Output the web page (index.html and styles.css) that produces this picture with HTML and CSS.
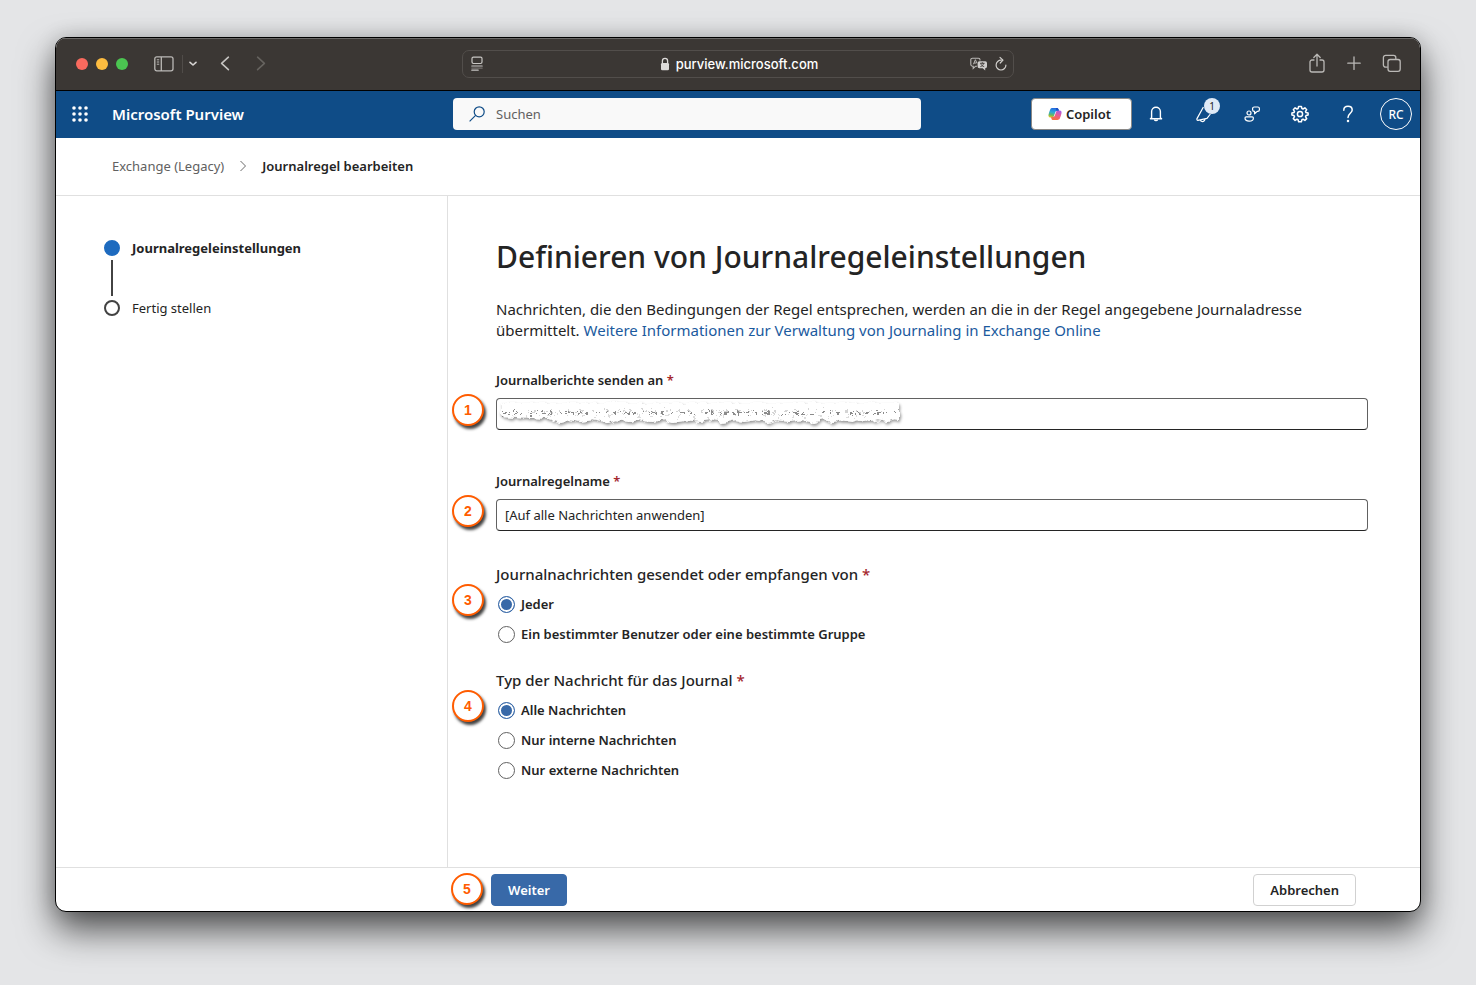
FILE: index.html
```html
<!DOCTYPE html>
<html lang="de">
<head>
    <meta charset="UTF-8">
    <meta name="viewport" content="width=device-width, initial-scale=1.0">
    <title>Journalregel bearbeiten - Microsoft Purview</title>
    <link rel="stylesheet" href="styles.css">
</head>
<body>
    <div class="window">
        <div class="titlebar">
            <div class="titlebar-left">
                <span class="light red"></span>
                <span class="light yellow"></span>
                <span class="light green"></span>
                <button class="tool sidebar-btn" aria-label="Seitenleiste">
                    <svg width="20" height="16" viewBox="0 0 20 16" fill="none" stroke="#bbb9b6" stroke-width="1.3"><rect x="0.8" y="0.8" width="18.2" height="14" rx="2"/><path d="M7.3 1v14"/><path d="M2.8 3.8h2.4M2.8 6h2.4M2.8 8.2h2.4" stroke-width="1"/></svg>
                </button>
                <span class="divider"></span>
                <button class="tool menu-btn" aria-label="Tabgruppen">
                    <svg width="8" height="6" viewBox="0 0 8 6" fill="none" stroke="#d5d3d1" stroke-width="1.6" stroke-linecap="round" stroke-linejoin="round"><path d="M1 1.3L4 4l3-2.7"/></svg>
                </button>
                <button class="tool back-btn" aria-label="Zurück">
                    <svg width="10" height="16" viewBox="0 0 10 16" fill="none" stroke="#c5c3c0" stroke-width="1.6" stroke-linecap="round" stroke-linejoin="round"><path d="M8.4 1.2L1.6 7.4l6.800 6.200"/></svg>
                </button>
                <button class="tool forward-btn" aria-label="Vorwärts">
                    <svg width="10" height="16" viewBox="0 0 10 16" fill="none" stroke="#66635f" stroke-width="1.6" stroke-linecap="round" stroke-linejoin="round"><path d="M1.6 1.2L8.4 7.4l-6.8 6.2"/></svg>
                </button>
            </div>
            <div class="address">
                <svg width="12" height="16" viewBox="0 0 12 16" fill="none" stroke="#c8c6c3" stroke-width="1.2" stroke-linecap="round"><rect x="1" y="1.2" width="10" height="6.3" rx="1.4"/><path d="M0.8 10h10.4M0.8 14.2h6.4"/><path d="M0.8 12.1h10.4" stroke-opacity="0.4"/></svg>
                <span class="url">
                    <svg width="10" height="14" viewBox="0 0 10 14"><path d="M2.4 6.2V4a2.6 2.6 0 0 1 5.2 0v2.2" fill="none" stroke="#dddbd9" stroke-width="1.3"/><rect x="1" y="6" width="8" height="7.2" rx="1.3" fill="#dddbd9"/></svg>
                    purview.microsoft.com
                </span>
                <span class="address-end">
                    <svg width="18" height="14" viewBox="0 0 18 14" fill="none"><path d="M7 9.2H5.6L3.2 11.4V9.2H2.4a1.6 1.6 0 0 1-1.6-1.6V2.8a1.6 1.6 0 0 1 1.6-1.6h6a1.6 1.6 0 0 1 1.6 1.6v.6" stroke="#bbb9b6" stroke-width="1.1"/><path d="M3.4 7.3l2-4.6 1.5 3.4M4 6h2.4" stroke="#bbb9b6"/><path d="M9.3 4.2h6a1.7 1.7 0 0 1 1.7 1.7v3.7a1.7 1.7 0 0 1-1.7 1.7h-.1v2.3l-2.5-2.3H9.3a1.7 1.7 0 0 1-1.7-1.7V5.9a1.7 1.7 0 0 1 1.7-1.7z" fill="#cfcdcb"/><path d="M10 6.3h4.6M12.3 5.2v1.1M10.4 9.6c1.8-.5 2.9-1.7 3.2-3.2M11 7.3c.4 1 1.6 2 3.2 2.3" stroke="#3b3734" stroke-width="0.9"/></svg>
                    <svg width="12" height="16" viewBox="0 0 12 16" fill="none" stroke="#d0cecb" stroke-width="1.2" stroke-linecap="round" stroke-linejoin="round"><path d="M6.3 4.2A4.9 4.9 0 1 0 10.9 9"/><path d="M5 1.4l3 2.8-2.8 2.8"/></svg>
                </span>
            </div>
            <div class="titlebar-right">
                <button class="tool" aria-label="Teilen">
                    <svg width="18" height="22" viewBox="0 0 18 22" fill="none" stroke="#bbb9b6" stroke-width="1.3" stroke-linecap="round" stroke-linejoin="round"><path d="M6 7H4a2 2 0 0 0-2 2v8a2 2 0 0 0 2 2h10a2 2 0 0 0 2-2V9a2 2 0 0 0-2-2h-2"/><path d="M9 13V1.500M5.8 4.500L9 1.300l3.200 3.200"/></svg>
                </button>
                <button class="tool" aria-label="Neuer Tab">
                    <svg width="18" height="18" viewBox="0 0 18 18" stroke="#bbb9b6" stroke-width="1.3" stroke-linecap="round"><path d="M9 2v12.4M2.8 8.200h12.400"/></svg>
                </button>
                <button class="tool" aria-label="Tabübersicht">
                    <svg width="20" height="20" viewBox="0 0 20 20" fill="none" stroke="#bbb9b6" stroke-width="1.3"><rect x="6" y="5.500" width="12.2" height="11.8" rx="2.2"/><path d="M5.8 13.1H3.6a2.2 2.2 0 0 1-2.2-2.2V3.500a2.2 2.2 0 0 1 2.2-2.2h8a2.2 2.2 0 0 1 2.2 2.2v1.8"/></svg>
                </button>
            </div>
        </div>

        <header class="header">
            <button class="icon-btn" aria-label="App-Startfeld">
                <svg width="18" height="18" viewBox="0 0 18 18" fill="#fff"><circle cx="3" cy="3" r="1.8"/><circle cx="9" cy="3" r="1.8"/><circle cx="15" cy="3" r="1.8"/><circle cx="3" cy="9" r="1.8"/><circle cx="9" cy="9" r="1.8"/><circle cx="15" cy="9" r="1.8"/><circle cx="3" cy="15" r="1.8"/><circle cx="9" cy="15" r="1.8"/><circle cx="15" cy="15" r="1.8"/></svg>
            </button>
            <a class="brand" href="#">Microsoft Purview</a>
            <label class="search">
                <svg width="16" height="16" viewBox="0 0 16 16" fill="none" stroke="#0f4c87" stroke-width="1.2"><circle cx="10.2" cy="5.8" r="5"/><path d="M6.6 9.4L0.6 15.4"/></svg>
                <input type="text" placeholder="Suchen" aria-label="Suchen">
            </label>
            <div class="actions">
                <button class="copilot">
                    <svg width="14" height="14" viewBox="0 0 14 14">
                        <defs>
                            <linearGradient id="cool" x1="0.5" y1="0" x2="0.3" y2="1"><stop offset="0" stop-color="#2468e0"/><stop offset="0.45" stop-color="#2fa8d8"/><stop offset="0.75" stop-color="#62b868"/><stop offset="1" stop-color="#e5c21d"/></linearGradient>
                            <linearGradient id="warm" x1="0.8" y1="0" x2="0.4" y2="1"><stop offset="0" stop-color="#a65be8"/><stop offset="0.5" stop-color="#ee5a8e"/><stop offset="1" stop-color="#f8743c"/></linearGradient>
                        </defs>
                        <path d="M4.6 1h4.2c1 0 1.500.6 1.800 1.600l.4 1.400H9c-1 0-1.500.5-1.800 1.400L6 8.800C5.700 9.800 5.100 10.400 4.100 10.400H2.200C.8 10.400.2 9.300.5 7.800 1 5.800 1.400 4 2.200 2.400 2.700 1.400 3.500 1 4.600 1z" fill="url(#cool)"/>
                        <path d="M9.400 13H5.200c-1 0-1.500-.6-1.800-1.600L3 10h2c1 0 1.500-.5 1.800-1.400L8 5.200c.3-1 .9-1.600 1.900-1.600h1.900c1.400 0 2 1.100 1.700 2.600-.5 2-.9 3.800-1.700 5.400-.5 1-1.300 1.400-2.400 1.400z" fill="url(#warm)"/>
                        <path d="M7.800 1h1c1 0 1.500.6 1.800 1.600l.3 1H8.500z" fill="#1c4fc4"/>
                    </svg>
                    Copilot
                </button>
                <button class="icon-btn" aria-label="Benachrichtigungen">
                    <svg width="16" height="18" viewBox="0 0 16 18" fill="none" stroke="#fff" stroke-width="1.4" stroke-linejoin="round"><path d="M3.6 12.8V6.6a4.4 4.4 0 0 1 8.8 0v6.2l1.2 1H2.4z"/><path d="M6.4 14.4a1.7 1.7 0 0 0 3.2 0"/></svg>
                </button>
                <button class="icon-btn" aria-label="Neuigkeiten">
                    <svg width="18" height="18" viewBox="0 0 18 18" fill="none" stroke="#fff" stroke-width="1.2" stroke-linejoin="round"><path d="M8.4 2L2 13.6c-.4.8 0 1.6.9 1.7L12 13.400l3.400-4.400"/><path d="M5.4 15c.4 1.600 2.400 2.100 3.800.8.500-.5.700-1.100.6-1.800"/></svg>
                    <span class="count">1</span>
                </button>
                <button class="icon-btn" aria-label="Feedback">
                    <svg width="18" height="18" viewBox="0 0 18 18" fill="none" stroke="#fff" stroke-width="1.2" stroke-linejoin="round"><circle cx="6" cy="8" r="2"/><path d="M3.200 11.800h6a1.200 1.200 0 0 1 1.200 1.200c0 2-1.700 3.200-4.200 3.200S2 15 2 13a1.200 1.200 0 0 1 1.200-1.200z"/><path d="M11.200 2h3.600A1.600 1.600 0 0 1 16.400 3.600v1.200a1.600 1.600 0 0 1-1.600 1.600h-.6l-2.600 2.400V6.400h-.4A1.600 1.600 0 0 1 9.600 4.800V3.600A1.600 1.600 0 0 1 11.200 2z"/></svg>
                </button>
                <button class="icon-btn" aria-label="Einstellungen">
                    <svg width="18" height="18" viewBox="0 0 18 18" fill="none" stroke="#fff" stroke-width="1.5" stroke-linejoin="round"><path d="M7.6 1.4h2.8l.5 2.1 1.1.5 1.9-1.2 1.8 1.9-1.2 1.8.5 1.1 2.1.5v2l-2.1.5-.5 1.1 1.2 1.9-1.8 1.800-1.900-1.200-1.100.5-.5 2.100H7.600l-.5-2.100-1.100-.5-1.900 1.200-1.800-1.800 1.200-1.900-.5-1.100-2.100-.5v-2L3 7.600l.5-1.100-1.200-1.800 1.800-1.900L6 4l1.100-.5z"/><circle cx="9" cy="9" r="2.6"/></svg>
                </button>
                <button class="icon-btn" aria-label="Hilfe">
                    <svg width="12" height="18" viewBox="0 0 12 18" fill="none" stroke="#fff" stroke-width="1.5" stroke-linecap="round"><path d="M1.8 5.2C1.8 2.8 3.5 1.3 6 1.3s4.2 1.5 4.2 3.7C10.200 8 6 8.600 6 12.400"/><circle cx="6" cy="16" r="0.5" fill="#fff"/></svg>
                </button>
                <button class="icon-btn" aria-label="Konto"><span class="avatar">RC</span></button>
            </div>
        </header>

        <nav class="breadcrumb">
            <a href="#">Exchange (Legacy)</a>
            <svg width="8" height="12" viewBox="0 0 8 12" fill="none" stroke="#6b6b6b"><path d="M1.5 1l5 5-5 5"/></svg>
            <strong>Journalregel bearbeiten</strong>
        </nav>

        <div class="content">
            <ol class="steps">
                <li class="step active">Journalregeleinstellungen</li>
                <li class="step">Fertig stellen</li>
            </ol>

            <main class="main">
                <h1>Definieren von Journalregeleinstellungen</h1>
                <p class="intro">Nachrichten, die den Bedingungen der Regel entsprechen, werden an die in der Regel angegebene Journaladresse übermittelt. <a href="#">Weitere Informationen zur Verwaltung von Journaling in Exchange Online</a></p>

                <form id="rule">
                    <div class="field">
                        <label for="address">Journalberichte senden an <span class="required">*</span></label>
                        <div class="control">
                            <span class="badge">1</span>
                            <input type="text" id="address">
                            <!-- torn strip that hides the address -->
                            <svg class="redacted" width="410" height="30" viewBox="0 0 410 30">
                                <defs>
                                    <filter id="rough" x="-2%" y="-30%" width="104%" height="160%">
                                        <feTurbulence type="fractalNoise" baseFrequency="0.13" numOctaves="3" seed="4"/>
                                        <feDisplacementMap in="SourceGraphic" scale="6" xChannelSelector="R" yChannelSelector="G"/>
                                        <feDropShadow dx="1" dy="2" stdDeviation="1.5" flood-color="#000" flood-opacity="0.42"/>
                                    </filter>
                                    <filter id="specks" x="-2%" y="-20" width="104%" height="60" filterUnits="userSpaceOnUse">
                                        <feTurbulence type="fractalNoise" baseFrequency="0.3" numOctaves="2" seed="9"/>
                                        <feDisplacementMap in="SourceGraphic" scale="9" xChannelSelector="R" yChannelSelector="G"/>
                                        <feGaussianBlur stdDeviation="0.4"/>
                                    </filter>
                                </defs>
                                <path d="M4 17L4 4h398v18l-5-1-7 2-8-2-9 2-9-3-8 3-12-2-8 2-10-2-9 3-11-3-14 2-12-2-8 3-13-3-12 2-8-2-14 3-12-3-10 2-12-2-15 3-9-3-12 2-14-2-9 2-12-2-11 3-13-3-12 2-12-2-9 3-12-4z" fill="#fff" filter="url(#rough)"/>
                                <g fill="none" filter="url(#specks)">
                                    <path d="M5 14h394" stroke="#666" stroke-width="1.5" stroke-dasharray="3 4 1 3 5 4 2 6"/>
                                    <path d="M30 12h360" stroke="#aaa" stroke-dasharray="1 5 3 9 2 4"/>
                                    <path d="M14 17h370" stroke="#bbb" stroke-dasharray="2 7 1 4 3 11"/>
                                </g>
                            </svg>
                        </div>
                    </div>

                    <div class="field">
                        <label for="name">Journalregelname <span class="required">*</span></label>
                        <div class="control">
                            <span class="badge">2</span>
                            <input type="text" id="name" value="[Auf alle Nachrichten anwenden]">
                        </div>
                    </div>

                    <fieldset>
                        <legend>Journalnachrichten gesendet oder empfangen von <span class="required">*</span></legend>
                        <span class="badge">3</span>
                        <label class="radio"><input type="radio" name="scope" checked> Jeder</label>
                        <label class="radio"><input type="radio" name="scope"> Ein bestimmter Benutzer oder eine bestimmte Gruppe</label>
                    </fieldset>

                    <fieldset>
                        <legend>Typ der Nachricht für das Journal <span class="required">*</span></legend>
                        <span class="badge">4</span>
                        <label class="radio"><input type="radio" name="type" checked> Alle Nachrichten</label>
                        <label class="radio"><input type="radio" name="type"> Nur interne Nachrichten</label>
                        <label class="radio"><input type="radio" name="type"> Nur externe Nachrichten</label>
                    </fieldset>
                </form>
            </main>
        </div>

        <footer class="footer">
            <div class="next">
                <span class="badge">5</span>
                <button class="btn primary" type="submit" form="rule">Weiter</button>
            </div>
            <button class="btn" type="button">Abbrechen</button>
        </footer>
    </div>
</body>
</html>
```
FILE: styles.css
```css
*,
*::before,
*::after {
    box-sizing: border-box;
}
body {
    margin: 0;
    min-height: 100vh;
    padding: 37px 55px 73px;
    display: flex;
    background: #e4e5e7;
    color: #242424;
    font-family: "Noto Sans", "Open Sans", sans-serif;
    font-size: 13px;
    line-height: 20px;
}
button,
input {
    font: inherit;
    color: inherit;
}
button {
    cursor: pointer;
}
a {
    color: inherit;
    text-decoration: none;
}
svg {
    flex: none;
}
.window {
    flex: 1;
    min-width: 0;
    display: flex;
    flex-direction: column;
    background: #fff;
    border: 1px solid #000;
    border-radius: 11px;
    overflow: hidden;
    box-shadow: 0 18px 36px rgba(0, 0, 0, 0.65), 0 0 20px rgba(0, 0, 0, 0.15);
}

/* browser bar */
.titlebar {
    display: grid;
    grid-template-columns: 1fr minmax(200px, 552px) 1fr;
    align-items: center;
    height: 53px;
    background: #3b3734;
    border-bottom: 1px solid #000;
    box-shadow: inset 0 1px #6b6967;
}
.titlebar-left {
    display: flex;
    align-items: center;
    gap: 8px;
    padding-left: 20px;
}
.light {
    width: 12px;
    height: 12px;
    border-radius: 50%;
}
.red {
    background: #f96a5e;
}
.yellow {
    background: #fdbc40;
}
.green {
    background: #4bc551;
}
.tool {
    display: flex;
    padding: 0;
    border: 0;
    background: none;
}
.sidebar-btn {
    margin-left: 18px;
}
.divider {
    width: 1px;
    height: 18px;
    background: #504c49;
}
.menu-btn {
    margin-left: -2px;
}
.back-btn {
    margin-left: 15px;
}
.forward-btn {
    margin-left: 18px;
}
.address {
    display: grid;
    grid-template-columns: 1fr auto 1fr;
    align-items: center;
    height: 28px;
    padding: 0 6px 0 8px;
    border: 1px solid #524e4b;
    border-radius: 7px;
}
.url {
    display: flex;
    align-items: center;
    gap: 6px;
    color: #fff;
    font-family: Inter, sans-serif;
    font-weight: 500;
}
.address-end {
    display: flex;
    align-items: center;
    justify-content: flex-end;
    gap: 7px;
}
.titlebar-right {
    display: flex;
    align-items: center;
    justify-content: flex-end;
    gap: 19px;
    padding-right: 18px;
}

/* app header */
.header {
    display: flex;
    align-items: center;
    height: 47px;
    padding-bottom: 2px;
    background: #0f4c87;
    color: #fff;
}
.icon-btn {
    position: relative;
    display: flex;
    align-items: center;
    justify-content: center;
    width: 48px;
    height: 45px;
    padding: 0;
    border: 0;
    background: none;
}
.brand {
    flex: 0 1 341px;
    margin-left: 8px;
    font-size: 15px;
    font-weight: 600;
}
.search {
    flex: 0 1 468px;
    display: flex;
    align-items: center;
    gap: 11px;
    height: 32px;
    padding-left: 16px;
    background: #f9f9f9;
    border-radius: 4px;
}
.search input {
    flex: 1;
    min-width: 0;
    padding: 0;
    border: 0;
    background: none;
    color: #242424;
}
.search input::placeholder {
    color: #616161;
    opacity: 1;
}
.actions {
    display: flex;
    align-items: center;
    margin-left: auto;
}
.copilot {
    display: flex;
    align-items: center;
    gap: 4px;
    height: 32px;
    padding: 0 20px 0 16px;
    border: 1px solid #8a8886;
    border-radius: 4px;
    background: #fff;
    color: #242424;
    font-weight: 600;
}
.count {
    position: absolute;
    top: 7px;
    right: 8px;
    width: 16px;
    height: 16px;
    border-radius: 50%;
    background: #dfeaf7;
    color: #242424;
    font-size: 10px;
    line-height: 16px;
}
.avatar {
    width: 32px;
    height: 32px;
    border: 1px solid #fff;
    border-radius: 50%;
    font-size: 12px;
    font-weight: 500;
    line-height: 32px;
}

.breadcrumb {
    display: flex;
    align-items: center;
    gap: 15px;
    height: 58px;
    padding: 0 56px 2px;
    border-bottom: 1px solid #e0e0e0;
}
.breadcrumb a {
    color: #616161;
}
.breadcrumb strong {
    font-weight: 600;
}

.content {
    flex: 1;
    display: flex;
}
.steps {
    flex: 0 0 392px;
    margin: 0;
    padding: 42px 48px;
    border-right: 1px solid #e0e0e0;
    list-style: none;
}
.step {
    position: relative;
    display: flex;
    align-items: center;
    gap: 12px;
    margin-bottom: 40px;
}
.step::before {
    content: "";
    width: 16px;
    height: 16px;
    border: 2px solid #424242;
    border-radius: 50%;
}
.step.active {
    font-weight: 700;
}
.step.active::before {
    border-color: #1e6bbf;
    background: #1e6bbf;
}
.step.active::after {
    content: "";
    position: absolute;
    left: 7px;
    top: 22px;
    width: 2px;
    height: 36px;
    background: #424242;
}

.main {
    flex: 1;
    min-width: 0;
    padding: 41px 52px 24px 48px;
}
h1 {
    margin: 0 0 22px;
    font-size: 30px;
    font-weight: 500;
    line-height: 40px;
}
.intro {
    margin: 0 0 29px;
    font-size: 15px;
    line-height: 21px;
}
.intro a {
    color: #1b5a9e;
}
.field {
    margin-bottom: 41px;
    font-weight: 600;
}
.field label {
    display: block;
    margin-bottom: 8px;
}
.required {
    color: #a4262c;
}
.control {
    position: relative;
}
.control input {
    display: block;
    width: 100%;
    height: 32px;
    padding: 0 8px;
    border: 1px solid #616161;
    border-bottom-color: #242424;
    border-radius: 4px;
    background: #fff;
    font-weight: 400;
}
.redacted {
    position: absolute;
    left: 1px;
    top: 1px;
}
.field + fieldset {
    margin-top: -9px;
}
fieldset {
    position: relative;
    margin: 0 0 20px;
    padding: 0;
    border: 0;
}
legend {
    margin-bottom: 4px;
    padding: 0;
    font-size: 15px;
    font-weight: 500;
    line-height: 22px;
}
.radio {
    display: flex;
    align-items: center;
    gap: 6px;
    height: 30px;
    padding-left: 2px;
    font-weight: 600;
}
.radio input {
    appearance: none;
    width: 17px;
    height: 17px;
    margin: 0;
    border: 1px solid #616161;
    border-radius: 50%;
}
.radio input:checked {
    border-color: #3869a8;
    background: #3869a8;
    box-shadow: inset 0 0 0 2px #fff;
}

/* numbered callouts next to the controls */
.badge {
    position: absolute;
    left: -44px;
    top: -4px;
    width: 32px;
    height: 32px;
    border: 2px solid #ff5c00;
    border-radius: 50%;
    background: #fff;
    box-shadow: 2px 3px 3px rgba(0, 0, 0, 0.75);
    color: #ff5c00;
    font: bold 14px/28px "Liberation Sans", Arial, sans-serif;
    text-align: center;
}
fieldset .badge {
    top: -5px;
}
.next {
    position: relative;
}
.next .badge {
    left: -40px;
    top: -1px;
}

.footer {
    display: flex;
    justify-content: space-between;
    padding: 6px 64px 5px 435px;
    border-top: 1px solid #e0e0e0;
}
.btn {
    height: 32px;
    padding: 0 16px;
    border: 1px solid #d1d1d1;
    border-radius: 4px;
    background: #fff;
    font-weight: 600;
}
.primary {
    border-color: #3869a8;
    background: #3869a8;
    color: #fff;
}
```
